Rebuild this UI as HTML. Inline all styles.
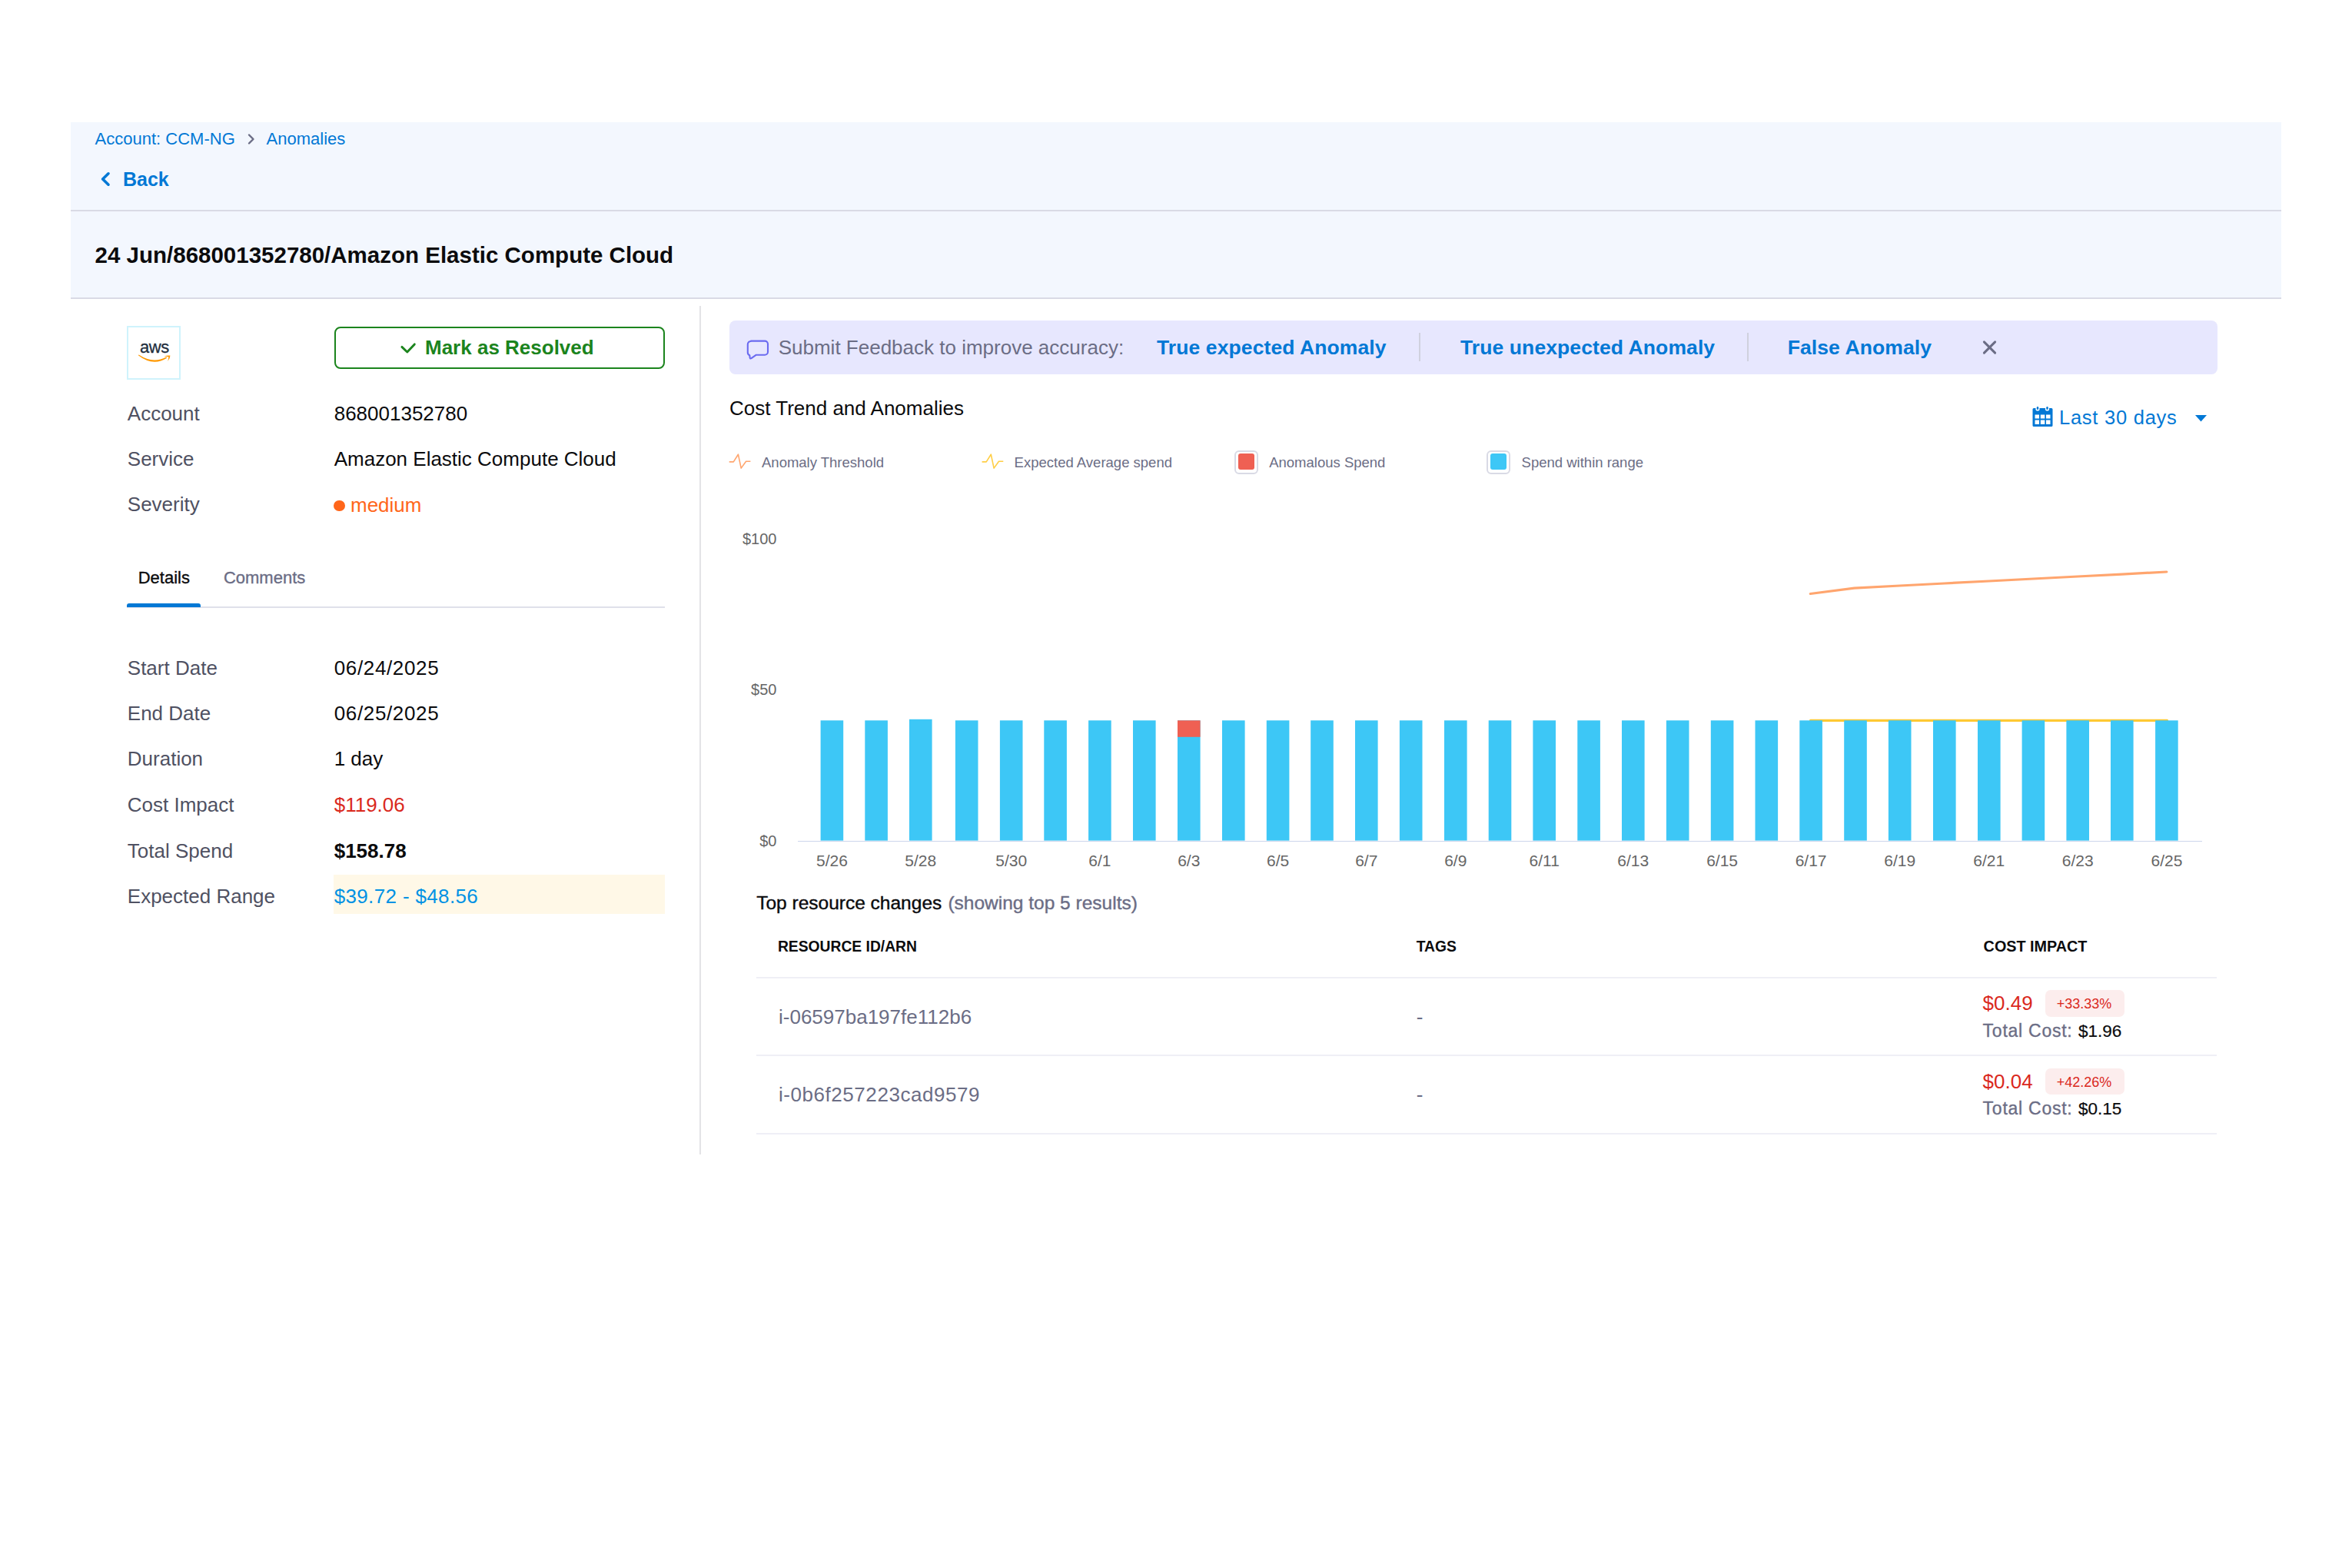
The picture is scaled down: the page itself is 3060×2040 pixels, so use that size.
<!DOCTYPE html>
<html><head><meta charset="utf-8"><style>
html,body{margin:0;padding:0;background:#fff;width:3060px;height:2040px;overflow:hidden;}
.t{position:absolute;white-space:nowrap;line-height:1;font-family:"Liberation Sans", sans-serif;}
.r{position:absolute;}
@media (max-width:2000px){html{zoom:0.5;}}
</style></head><body>
<div class="r" style="left:92px;top:159px;width:2876px;height:230px;background:#F3F7FE;"></div>
<div class="r" style="left:92px;top:273px;width:2876px;height:2px;background:#D9DAE5;"></div>
<div class="r" style="left:92px;top:387px;width:2876px;height:2px;background:#D9DAE5;"></div>
<div class="t" style="left:123.6px;top:170.30px;font-size:22px;color:#0278D5;font-weight:400;">Account: CCM-NG</div>
<svg class="r" style="left:318px;top:172.5px" width="18" height="16" viewBox="0 0 18 16"><path d="M6 2.5 L11.5 8 L6 13.5" fill="none" stroke="#6B6D85" stroke-width="2.4" stroke-linecap="round" stroke-linejoin="round"/></svg>
<div class="t" style="left:346.6px;top:170.30px;font-size:22px;color:#0278D5;font-weight:400;">Anomalies</div>
<svg class="r" style="left:126px;top:218px" width="24" height="30" viewBox="0 0 24 30"><path d="M15 7.8 L7.6 15 L15 22.2" fill="none" stroke="#0278D5" stroke-width="3.6" stroke-linecap="round" stroke-linejoin="round"/></svg>
<div class="t" style="left:160px;top:220.50px;font-size:25px;color:#0278D5;font-weight:700;">Back</div>
<div class="t" style="left:123.6px;top:317.00px;font-size:29.5px;color:#0B0B0D;font-weight:700;">24 Jun/868001352780/Amazon Elastic Compute Cloud</div>
<div class="r" style="left:165px;top:424px;width:70px;height:70px;background:#ffffff;box-sizing:border-box;border:2px solid #CFF3FC"></div>
<div class="t" style="left:178px;top:441.5px;width:46px;text-align:center;font-size:22px;color:#232F3E;letter-spacing:-0.4px;line-height:20px;-webkit-text-stroke:0.3px #232F3E">aws</div>
<svg class="r" style="left:155px;top:415px" width="90" height="90" viewBox="155 415 90 90"><path d="M179.8,462.3 Q199,477.2 217.2,465.8 L216.3,464.4 Q199,473.8 180.6,461.6 Z" fill="#FF9900"/><path d="M213.4,463.6 Q217.8,462 221.4,462.6 Q221.6,466.4 218.2,470 Q219.2,466.5 219.4,464.4 Q216.6,463.8 213.4,463.6 Z" fill="#FF9900"/></svg>
<div class="r" style="left:435px;top:425px;width:430px;height:55px;background:#ffffff;box-sizing:border-box;border:2px solid #1B841D;border-radius:8px"></div>
<svg class="r" style="left:520px;top:441px" width="24" height="22" viewBox="0 0 24 22"><path d="M2.9 10.4 L9.8 17 L19.3 6.9" fill="none" stroke="#1B841D" stroke-width="2.9" stroke-linecap="round" stroke-linejoin="round"/></svg>
<div class="t" style="left:553px;top:439.20px;font-size:26px;color:#1B841D;font-weight:700;">Mark as Resolved</div>
<div class="t" style="left:165.8px;top:524.50px;font-size:26px;color:#4F5162;font-weight:400;">Account</div>
<div class="t" style="left:434.7px;top:524.50px;font-size:26px;color:#0B0B0D;font-weight:400;">868001352780</div>
<div class="t" style="left:165.8px;top:583.60px;font-size:26px;color:#4F5162;font-weight:400;">Service</div>
<div class="t" style="left:434.7px;top:583.60px;font-size:26px;color:#0B0B0D;font-weight:400;">Amazon Elastic Compute Cloud</div>
<div class="t" style="left:165.8px;top:643.40px;font-size:26px;color:#4F5162;font-weight:400;">Severity</div>
<div class="r" style="left:434px;top:650.5px;width:14.5px;height:14.5px;background:#FF661A;border-radius:50%"></div>
<div class="t" style="left:456px;top:643.60px;font-size:26px;color:#FF661A;font-weight:400;">medium</div>
<div class="t" style="left:179.7px;top:741.00px;font-size:22px;color:#0B0B0D;font-weight:400;-webkit-text-stroke:0.35px #0B0B0D">Details</div>
<div class="t" style="left:290.9px;top:741.00px;font-size:22px;color:#6B6D85;font-weight:400;-webkit-text-stroke:0.35px #6B6D85">Comments</div>
<div class="r" style="left:165px;top:788.5px;width:700px;height:2.0px;background:#DFE0EA;"></div>
<div class="r" style="left:165px;top:785px;width:96px;height:4.600000000000023px;background:#0278D5;border-radius:3px 3px 0 0"></div>
<div class="r" style="left:434px;top:1138px;width:431px;height:51px;background:#FFF8E7;"></div>
<div class="t" style="left:165.8px;top:855.50px;font-size:26px;color:#4F5162;font-weight:400;">Start Date</div>
<div class="t" style="left:434.7px;top:855.50px;font-size:26px;color:#0B0B0D;font-weight:400;letter-spacing:0.65px">06/24/2025</div>
<div class="t" style="left:165.8px;top:914.60px;font-size:26px;color:#4F5162;font-weight:400;">End Date</div>
<div class="t" style="left:434.7px;top:914.60px;font-size:26px;color:#0B0B0D;font-weight:400;letter-spacing:0.65px">06/25/2025</div>
<div class="t" style="left:165.8px;top:974.40px;font-size:26px;color:#4F5162;font-weight:400;">Duration</div>
<div class="t" style="left:434.7px;top:974.40px;font-size:26px;color:#0B0B0D;font-weight:400;letter-spacing:0px">1 day</div>
<div class="t" style="left:165.8px;top:1034.00px;font-size:26px;color:#4F5162;font-weight:400;">Cost Impact</div>
<div class="t" style="left:434.7px;top:1034.00px;font-size:26px;color:#DA291D;font-weight:400;letter-spacing:0px">$119.06</div>
<div class="t" style="left:165.8px;top:1093.60px;font-size:26px;color:#4F5162;font-weight:400;">Total Spend</div>
<div class="t" style="left:434.7px;top:1093.60px;font-size:26px;color:#0B0B0D;font-weight:700;letter-spacing:0px">$158.78</div>
<div class="t" style="left:165.8px;top:1153.40px;font-size:26px;color:#4F5162;font-weight:400;">Expected Range</div>
<div class="t" style="left:434.7px;top:1153.40px;font-size:26px;color:#0092E4;font-weight:400;letter-spacing:0.35px">$39.72 - $48.56</div>
<div class="r" style="left:910px;top:398px;width:2px;height:1104px;background:#E3E3E6;"></div>
<div class="r" style="left:949px;top:417px;width:1936px;height:70px;background:#E7E7FE;border-radius:8px"></div>
<svg class="r" style="left:970px;top:441px" width="32" height="28" viewBox="0 0 32 28"><path d="M7 2.6 H25 A4 4 0 0 1 29 6.6 V16.8 A4 4 0 0 1 25 20.8 H13.5 L7.5 25.2 Q5.8 26.2 5.6 24.2 L5.3 21.3 Q2.8 20.4 2.8 17.5 V7 A4 4 0 0 1 7 3 Z" fill="none" stroke="#6B6BF0" stroke-width="2.1" stroke-linejoin="round"/></svg>
<div class="t" style="left:1012.7px;top:439.40px;font-size:26px;color:#6B6D85;font-weight:400;">Submit Feedback to improve accuracy:</div>
<div class="t" style="left:1505px;top:439.40px;font-size:26.5px;color:#0278D5;font-weight:700;letter-spacing:0.1px">True expected Anomaly</div>
<div class="r" style="left:1846px;top:432.5px;width:2px;height:37.5px;background:#D0D1DE;"></div>
<div class="t" style="left:1900px;top:439.40px;font-size:26.5px;color:#0278D5;font-weight:700;letter-spacing:0.1px">True unexpected Anomaly</div>
<div class="r" style="left:2273px;top:432.5px;width:2px;height:37.5px;background:#D0D1DE;"></div>
<div class="t" style="left:2325.7px;top:439.40px;font-size:26.5px;color:#0278D5;font-weight:700;letter-spacing:0.1px">False Anomaly</div>
<svg class="r" style="left:2576px;top:440px" width="26" height="24" viewBox="0 0 26 24"><path d="M5.4 4.9 L19.6 19.1 M19.6 4.9 L5.4 19.1" fill="none" stroke="#6B6D85" stroke-width="3" stroke-linecap="round"/></svg>
<div class="t" style="left:949px;top:517.70px;font-size:26px;color:#0B0B0D;font-weight:400;">Cost Trend and Anomalies</div>
<svg class="r" style="left:2644px;top:529px" width="27" height="27" viewBox="0 0 27 27"><path d="M2 2 H25 A1.5 1.5 0 0 1 26.5 3.5 V24.5 A1.5 1.5 0 0 1 25 26 H2 A1.5 1.5 0 0 1 0.5 24.5 V3.5 A1.5 1.5 0 0 1 2 2 Z" fill="#0278D5"/><rect x="3.5" y="10.5" width="5.5" height="5" fill="#fff"/><rect x="10.8" y="10.5" width="5.5" height="5" fill="#fff"/><rect x="18" y="10.5" width="5.5" height="5" fill="#fff"/><rect x="3.5" y="17.5" width="5.5" height="5.5" fill="#fff"/><rect x="10.8" y="17.5" width="5.5" height="5.5" fill="#fff"/><rect x="18" y="17.5" width="5.5" height="5.5" fill="#fff"/><circle cx="7" cy="3" r="2.6" fill="#fff"/><circle cx="19.5" cy="3" r="2.6" fill="#fff"/><rect x="5.8" y="0" width="2.4" height="4" rx="1.2" fill="#0278D5"/><rect x="18.3" y="0" width="2.4" height="4" rx="1.2" fill="#0278D5"/></svg>
<div class="t" style="left:2679px;top:530.70px;font-size:25.5px;color:#0278D5;font-weight:400;letter-spacing:0.75px">Last 30 days</div>
<svg class="r" style="left:2855px;top:539px" width="17" height="10" viewBox="0 0 17 10"><path d="M1 1 H16 L8.5 9.5 Z" fill="#0278D5"/></svg>
<svg class="r" style="left:946px;top:588px" width="33" height="24" viewBox="946 588 33 24"><polyline points="948.7,600.9 954.3,600.9 960.4,591.2 964.2,609.1 970.6,600.2 976.4,600.2" fill="none" stroke="#FFA56E" stroke-width="1.6" stroke-linejoin="round"/></svg>
<div class="t" style="left:991px;top:592.80px;font-size:18.5px;color:#6B6D85;font-weight:400;">Anomaly Threshold</div>
<svg class="r" style="left:1275px;top:588px" width="33" height="24" viewBox="1275 588 33 24"><polyline points="1277.6,600.9 1283.2,600.9 1289.3,591.2 1293.1,609.1 1299.5,600.2 1305.3,600.2" fill="none" stroke="#FFCE45" stroke-width="1.6" stroke-linejoin="round"/></svg>
<div class="t" style="left:1319.6px;top:592.80px;font-size:18.5px;color:#6B6D85;font-weight:400;">Expected Average spend</div>
<div class="r" style="left:1606px;top:585.5px;width:31px;height:31.0px;background:#fff;box-sizing:border-box;border:2px solid #D9DAE5;border-radius:6px"></div>
<div class="r" style="left:1611px;top:590.3px;width:21px;height:20.90000000000009px;background:#EF6053;border-radius:3px"></div>
<div class="t" style="left:1651.2px;top:592.80px;font-size:18.5px;color:#6B6D85;font-weight:400;">Anomalous Spend</div>
<div class="r" style="left:1933.7px;top:585.5px;width:31.0px;height:31.0px;background:#fff;box-sizing:border-box;border:2px solid #D9DAE5;border-radius:6px"></div>
<div class="r" style="left:1938.7px;top:590.3px;width:21.0px;height:20.90000000000009px;background:#3DC7F6;border-radius:3px"></div>
<div class="t" style="left:1979.6px;top:592.80px;font-size:18.5px;color:#6B6D85;font-weight:400;">Spend within range</div>
<div class="t" style="right:2049.6px;top:691.30px;font-size:20px;color:#666666;font-weight:400;">$100</div>
<div class="t" style="right:2049.6px;top:887.20px;font-size:20px;color:#666666;font-weight:400;">$50</div>
<div class="t" style="right:2049.6px;top:1083.50px;font-size:20px;color:#666666;font-weight:400;">$0</div>
<div class="r" style="left:1038px;top:1093.5px;width:1827px;height:1.5px;background:#CCD6EB;"></div>
<div class="t" style="left:782.3999999999999px;width:600px;text-align:center;top:1108.70px;font-size:21px;color:#666666;font-weight:400;">5/26</div>
<div class="t" style="left:897.8px;width:600px;text-align:center;top:1108.70px;font-size:21px;color:#666666;font-weight:400;">5/28</div>
<div class="t" style="left:1015.7px;width:600px;text-align:center;top:1108.70px;font-size:21px;color:#666666;font-weight:400;">5/30</div>
<div class="t" style="left:1130.8999999999999px;width:600px;text-align:center;top:1108.70px;font-size:21px;color:#666666;font-weight:400;">6/1</div>
<div class="t" style="left:1246.8px;width:600px;text-align:center;top:1108.70px;font-size:21px;color:#666666;font-weight:400;">6/3</div>
<div class="t" style="left:1362.6px;width:600px;text-align:center;top:1108.70px;font-size:21px;color:#666666;font-weight:400;">6/5</div>
<div class="t" style="left:1477.8px;width:600px;text-align:center;top:1108.70px;font-size:21px;color:#666666;font-weight:400;">6/7</div>
<div class="t" style="left:1593.8px;width:600px;text-align:center;top:1108.70px;font-size:21px;color:#666666;font-weight:400;">6/9</div>
<div class="t" style="left:1709.2px;width:600px;text-align:center;top:1108.70px;font-size:21px;color:#666666;font-weight:400;">6/11</div>
<div class="t" style="left:1824.8000000000002px;width:600px;text-align:center;top:1108.70px;font-size:21px;color:#666666;font-weight:400;">6/13</div>
<div class="t" style="left:1940.6000000000004px;width:600px;text-align:center;top:1108.70px;font-size:21px;color:#666666;font-weight:400;">6/15</div>
<div class="t" style="left:2056.1000000000004px;width:600px;text-align:center;top:1108.70px;font-size:21px;color:#666666;font-weight:400;">6/17</div>
<div class="t" style="left:2171.7000000000003px;width:600px;text-align:center;top:1108.70px;font-size:21px;color:#666666;font-weight:400;">6/19</div>
<div class="t" style="left:2287.8px;width:600px;text-align:center;top:1108.70px;font-size:21px;color:#666666;font-weight:400;">6/21</div>
<div class="t" style="left:2403.2000000000003px;width:600px;text-align:center;top:1108.70px;font-size:21px;color:#666666;font-weight:400;">6/23</div>
<div class="t" style="left:2518.9px;width:600px;text-align:center;top:1108.70px;font-size:21px;color:#666666;font-weight:400;">6/25</div>
<svg class="r" style="left:0;top:0" width="3060" height="1200" viewBox="0 0 3060 1200"><line x1="2355.5" y1="937.4" x2="2819.5" y2="937.4" stroke="#FFC933" stroke-width="3.2" stroke-linecap="round"/><rect x="1067.60" y="937.3" width="29.6" height="156.30" fill="#3DC7F6"/><rect x="1125.30" y="937.3" width="29.6" height="156.30" fill="#3DC7F6"/><rect x="1183.00" y="935.8" width="29.6" height="157.80" fill="#3DC7F6"/><rect x="1242.90" y="937.3" width="29.6" height="156.30" fill="#3DC7F6"/><rect x="1300.90" y="937.3" width="29.6" height="156.30" fill="#3DC7F6"/><rect x="1358.30" y="937.3" width="29.6" height="156.30" fill="#3DC7F6"/><rect x="1416.10" y="937.3" width="29.6" height="156.30" fill="#3DC7F6"/><rect x="1474.00" y="937.3" width="29.6" height="156.30" fill="#3DC7F6"/><rect x="1532.00" y="937.3" width="29.6" height="156.30" fill="#3DC7F6"/><rect x="1532.00" y="937.3" width="29.6" height="21.5" fill="#EF6053"/><rect x="1590.00" y="937.3" width="29.6" height="156.30" fill="#3DC7F6"/><rect x="1647.80" y="937.3" width="29.6" height="156.30" fill="#3DC7F6"/><rect x="1705.20" y="937.3" width="29.6" height="156.30" fill="#3DC7F6"/><rect x="1763.00" y="937.3" width="29.6" height="156.30" fill="#3DC7F6"/><rect x="1820.90" y="937.3" width="29.6" height="156.30" fill="#3DC7F6"/><rect x="1879.00" y="937.3" width="29.6" height="156.30" fill="#3DC7F6"/><rect x="1936.70" y="937.3" width="29.6" height="156.30" fill="#3DC7F6"/><rect x="1994.40" y="937.3" width="29.6" height="156.30" fill="#3DC7F6"/><rect x="2052.30" y="937.3" width="29.6" height="156.30" fill="#3DC7F6"/><rect x="2110.00" y="937.3" width="29.6" height="156.30" fill="#3DC7F6"/><rect x="2167.90" y="937.3" width="29.6" height="156.30" fill="#3DC7F6"/><rect x="2225.80" y="937.3" width="29.6" height="156.30" fill="#3DC7F6"/><rect x="2283.50" y="937.3" width="29.6" height="156.30" fill="#3DC7F6"/><rect x="2341.30" y="937.3" width="29.6" height="156.30" fill="#3DC7F6"/><rect x="2399.20" y="937.3" width="29.6" height="156.30" fill="#3DC7F6"/><rect x="2456.90" y="937.3" width="29.6" height="156.30" fill="#3DC7F6"/><rect x="2515.00" y="937.3" width="29.6" height="156.30" fill="#3DC7F6"/><rect x="2573.00" y="937.3" width="29.6" height="156.30" fill="#3DC7F6"/><rect x="2630.60" y="937.3" width="29.6" height="156.30" fill="#3DC7F6"/><rect x="2688.40" y="937.3" width="29.6" height="156.30" fill="#3DC7F6"/><rect x="2746.00" y="937.3" width="29.6" height="156.30" fill="#3DC7F6"/><rect x="2804.10" y="937.3" width="29.6" height="156.30" fill="#3DC7F6"/><polyline points="2355.3,772.5 2412.5,765.1 2471.7,762.0 2529.8,759.0 2587.8,756.0 2645.4,753.0 2703.2,750.0 2760.8,747.1 2818.9,744.0" fill="none" stroke="#FFA56E" stroke-width="3.2" stroke-linecap="round" stroke-linejoin="round"/></svg>
<div class="t" style="left:984.2px;top:1163.40px;font-size:24.5px;color:#0B0B0D;font-weight:400;-webkit-text-stroke:0.4px #0B0B0D">Top resource changes</div>
<div class="t" style="left:1233.4px;top:1163.40px;font-size:24.5px;color:#6B6D85;font-weight:400;-webkit-text-stroke:0.4px #6B6D85">(showing top 5 results)</div>
<div class="t" style="left:1011.9px;top:1221.80px;font-size:19.3px;color:#0B0B0D;font-weight:700;">RESOURCE ID/ARN</div>
<div class="t" style="left:1842.7px;top:1221.80px;font-size:19.3px;color:#0B0B0D;font-weight:700;">TAGS</div>
<div class="t" style="left:2580.6px;top:1221.80px;font-size:19.8px;color:#0B0B0D;font-weight:700;">COST IMPACT</div>
<div class="r" style="left:984px;top:1270.5px;width:1900px;height:2.0px;background:#EFEFF6;"></div>
<div class="r" style="left:984px;top:1372px;width:1900px;height:2px;background:#EFEFF6;"></div>
<div class="r" style="left:984px;top:1474px;width:1900px;height:2px;background:#EFEFF6;"></div>
<div class="t" style="left:1013px;top:1310.20px;font-size:26px;color:#6B6D85;font-weight:400;">i-06597ba197fe112b6</div>
<div class="t" style="left:1842.7px;top:1310.20px;font-size:26px;color:#6B6D85;font-weight:400;">-</div>
<div class="t" style="left:2579.6px;top:1292.30px;font-size:26px;color:#DA291D;font-weight:400;">$0.49</div>
<div class="r" style="left:2661px;top:1288px;width:103px;height:34.59999999999991px;background:#FCEDED;border-radius:7px"></div>
<div class="t" style="left:2675.8px;top:1296.80px;font-size:18px;color:#DA291D;font-weight:400;">+33.33%</div>
<div class="t" style="left:2579.6px;top:1329.80px;font-size:23px;color:#6B6D85;font-weight:400;letter-spacing:0.75px;-webkit-text-stroke:0.35px #6B6D85">Total Cost:</div>
<div class="t" style="left:2704px;top:1330.80px;font-size:22.5px;color:#0B0B0D;font-weight:400;-webkit-text-stroke:0.2px #0B0B0D">$1.96</div>
<div class="t" style="left:1013px;top:1411.40px;font-size:26px;color:#6B6D85;font-weight:400;letter-spacing:0.55px">i-0b6f257223cad9579</div>
<div class="t" style="left:1842.7px;top:1411.40px;font-size:26px;color:#6B6D85;font-weight:400;">-</div>
<div class="t" style="left:2579.6px;top:1394.30px;font-size:26px;color:#DA291D;font-weight:400;">$0.04</div>
<div class="r" style="left:2661px;top:1390.3px;width:103px;height:34.0px;background:#FCEDED;border-radius:7px"></div>
<div class="t" style="left:2675.8px;top:1398.80px;font-size:18px;color:#DA291D;font-weight:400;">+42.26%</div>
<div class="t" style="left:2579.6px;top:1431.10px;font-size:23px;color:#6B6D85;font-weight:400;letter-spacing:0.75px;-webkit-text-stroke:0.35px #6B6D85">Total Cost:</div>
<div class="t" style="left:2704px;top:1432.10px;font-size:22.5px;color:#0B0B0D;font-weight:400;-webkit-text-stroke:0.2px #0B0B0D">$0.15</div>
</body></html>
